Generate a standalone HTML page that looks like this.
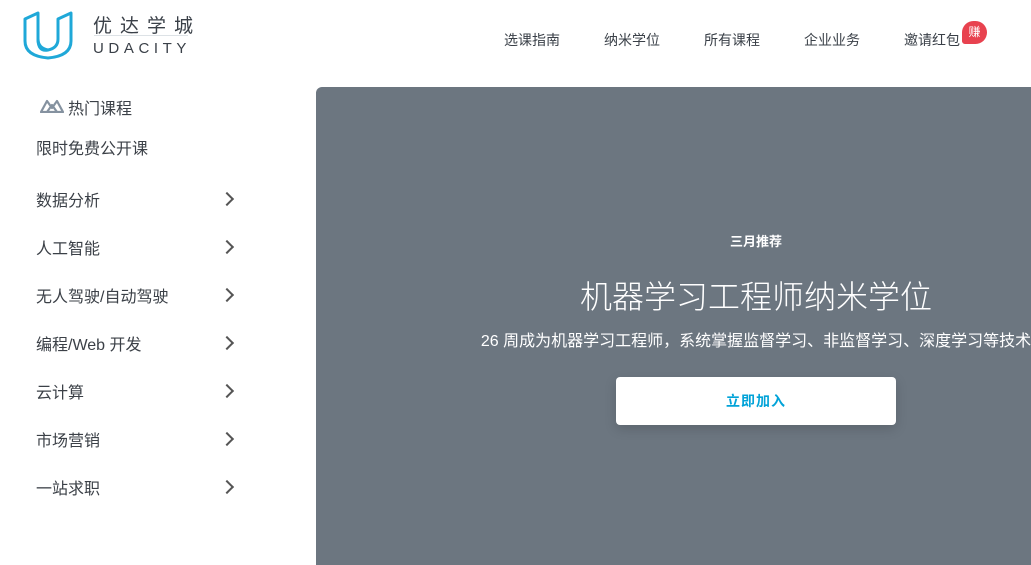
<!DOCTYPE html>
<html><head><meta charset="utf-8"><style>
*{margin:0;padding:0;box-sizing:border-box}
html,body{width:1031px;height:565px;overflow:hidden}
body{background:#fff;font-family:"Liberation Sans","Noto Sans CJK SC",sans-serif;position:relative;color:#333}
.abs{position:absolute}
.nav a{position:absolute;top:30px;font-size:14px;color:#3a4048;white-space:nowrap}
.side{position:absolute;left:36px;font-size:16px;color:#3b4047;white-space:nowrap}
.chev{position:absolute;left:222px;width:10px;height:10px;border-right:2px solid #555;border-top:2px solid #555;transform:rotate(45deg)}
.hero{position:absolute;left:316px;top:87px;width:880px;height:478px;background:#6c7680;border-radius:6px 0 0 0;color:#fff;text-align:center}
</style></head><body>
<svg class="abs" style="left:23px;top:10px" width="50" height="50" viewBox="0 0 50 50">
<path d="M2 9 L15 3 V29 Q15 38 25 40 Q35 38 35 29 V9 L48 3 V31 Q48 46 25 48 Q2 46 2 31 Z" fill="none" stroke="#1fa8d8" stroke-width="3" stroke-linejoin="round"/>
<path d="M15 29 Q15 42 25 40" fill="none" stroke="#1fa8d8" stroke-width="3"/>
</svg>
<div class="abs" style="left:93px;top:11px;font-size:19px;letter-spacing:8px;color:#3a4048">优达学城</div>
<div class="abs" style="left:94px;top:35px;width:94px;height:1px;background:#dde2e6"></div>
<div class="abs" style="left:93px;top:40px;font-size:15px;letter-spacing:4.6px;color:#3a4048">UDACITY</div>
<div class="nav">
<a style="left:504px">选课指南</a><a style="left:604px">纳米学位</a><a style="left:704px">所有课程</a><a style="left:804px">企业业务</a><a style="left:904px">邀请红包</a>
</div>
<div class="abs" style="left:962px;top:21px;width:25px;height:23px;background:#e8424f;border-radius:12px 12px 12px 3px;color:#fff;font-size:12px;text-align:center;line-height:23px">赚</div>
<svg class="abs" style="left:40px;top:99px" width="24" height="14" viewBox="0 0 24 14"><path d="M1 13 L7 2 L12 9 L17 2 L23 13 Z M7 13 L12 6 L17 13" fill="none" stroke="#8592a0" stroke-width="2.2" stroke-linejoin="round"/></svg>
<div class="abs" style="left:68px;top:95px;font-size:16px;color:#3b4047">热门课程</div>
<div class="side" style="top:135px">限时免费公开课</div>
<div class="side" style="top:187px">数据分析</div><div class="chev" style="top:194px"></div>
<div class="side" style="top:235px">人工智能</div><div class="chev" style="top:242px"></div>
<div class="side" style="top:283px">无人驾驶/自动驾驶</div><div class="chev" style="top:290px"></div>
<div class="side" style="top:331px">编程/Web 开发</div><div class="chev" style="top:338px"></div>
<div class="side" style="top:379px">云计算</div><div class="chev" style="top:386px"></div>
<div class="side" style="top:427px">市场营销</div><div class="chev" style="top:434px"></div>
<div class="side" style="top:475px">一站求职</div><div class="chev" style="top:482px"></div>
<div class="hero">
<div style="position:absolute;top:144px;width:100%;font-size:13px;font-weight:bold">三月推荐</div>
<div style="position:absolute;top:185px;width:100%;font-size:32px;font-weight:300">机器学习工程师纳米学位</div>
<div style="position:absolute;top:240px;width:100%;font-size:16px;white-space:nowrap">26 周成为机器学习工程师，系统掌握监督学习、非监督学习、深度学习等技术</div>
<div style="position:absolute;left:300px;top:290px;width:280px;height:48px;background:#fff;border-radius:4px;box-shadow:0 4px 12px rgba(0,0,0,.15);color:#02a3d8;font-size:14px;font-weight:bold;line-height:48px;letter-spacing:1px">立即加入</div>
</div>
</body></html>
